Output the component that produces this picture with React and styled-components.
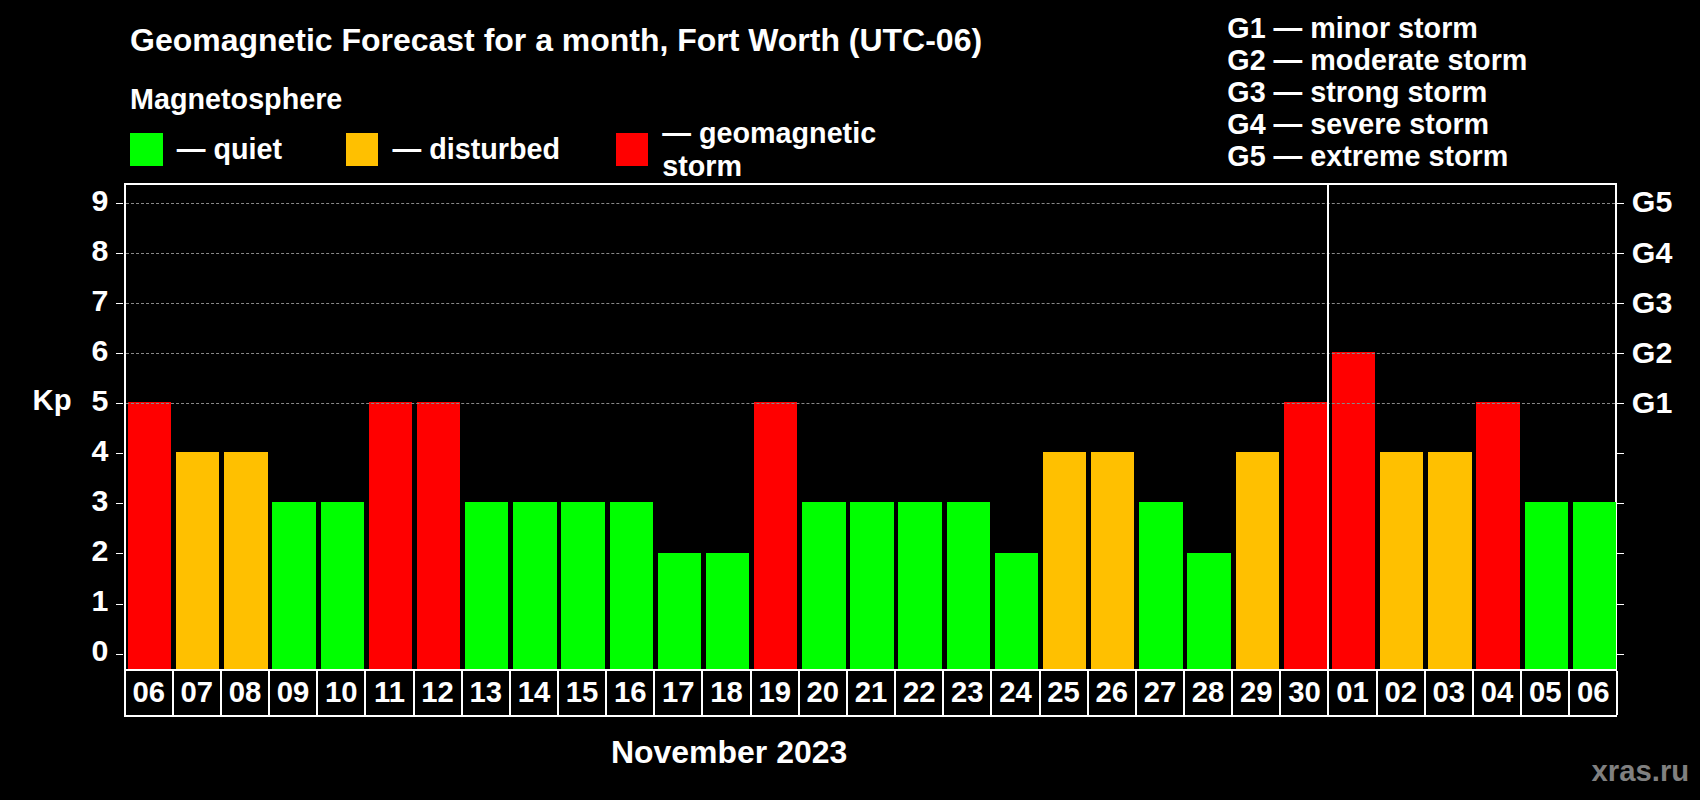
import React from "react";
import styled, { createGlobalStyle } from "styled-components";

const Global = createGlobalStyle`
  html, body { margin: 0; background: #000; }
  body { font-family: "Liberation Sans", Arial, sans-serif; color: #fff; font-weight: bold; }
`;

const U = 46.2;
const SLOT = 1377 / 31;
const days = ["06","07","08","09","10","11","12","13","14","15","16","17","18","19","20","21","22","23","24","25","26","27","28","29","30","01","02","03","04","05","06"];
const vals = [5,4,4,3,3,5,5,3,3,3,3,2,2,5,3,3,3,3,2,4,4,3,2,4,5,6,4,4,5,3,3];
const color = (v) => (v >= 5 ? "#ff0000" : v === 4 ? "#ffc000" : "#00ff00");

const Page = styled.div`
  width: 1568px; height: 738px; position: relative; zoom: 1.0842;
  display: flex; flex-direction: column;
`;
const Header = styled.div`
  display: flex; justify-content: space-between; padding: 0 0 0 120px; height: 169px; flex-shrink: 0;
`;
const LeftHead = styled.div`display: flex; flex-direction: column;`;
const Title = styled.div`font-size: 29.5px; margin-top: 22px; line-height: 30px;`;
const Sub = styled.div`font-size: 26.5px; margin-top: 25px; line-height: 30px;`;
const Legend = styled.div`display: flex; margin-top: 16px; align-items: center; height: 30px;`;
const LegendItem = styled.div`display: flex; align-items: center; gap: 13px; width: ${p => p.$w}px; font-size: 26.5px;`;
const Swatch = styled.div`width: 30px; height: 30px; background: ${p => p.$c};`;
const Scale = styled.div`
  width: 436px; padding-top: 11px; font-size: 26.5px; line-height: 29.5px;
`;
const Body = styled.div`display: flex; flex: 1;`;
const KpCol = styled.div`width: 72px; padding-top: 185px; line-height: 30px; font-size: 27px; text-align: right; padding-right: 6px; box-sizing: border-box;`;
const YAxis = styled.div`width: 42px; display: flex; flex-direction: column; margin-top: -7px; font-size: 28px;`;
const YLabel = styled.div`height: ${U}px; line-height: ${U}px; text-align: right; padding-right: 14px;`;
const PlotCol = styled.div`width: 1377px; display: flex; flex-direction: column;`;
const Plot = styled.div`
  position: relative; height: 448px; flex-shrink: 0; box-sizing: border-box;
  border: 2px solid #fff; border-bottom: none;
  display: flex; align-items: flex-end;
`;
const Grid = styled.div`
  position: absolute; left: 0; right: 0; top: ${p => p.$y}px;
  border-top: 1px dashed #888;
`;
const Tick = styled.div`
  position: absolute; top: ${p => p.$y}px; ${p => p.$side}: -9px; width: 7px; border-top: 1px solid #fff;
`;
const GLabel = styled.div`
  position: absolute; top: ${p => p.$y - 16}px; left: calc(100% + 16px); font-size: 28px; line-height: 32px;
`;
const Divider = styled.div`
  position: absolute; top: 0; bottom: 0; left: ${25 * SLOT - 2}px; border-left: 2px solid #fff;
`;
const Slot = styled.div`width: ${SLOT}px; display: flex; justify-content: center; flex-shrink: 0;`;
const Bar = styled.div`width: 40px; background: ${p => p.$c};`;
const Dates = styled.div`display: flex; flex-shrink: 0; height: 44px; border-top: 2px solid #fff; border-bottom: 2px solid #fff; box-sizing: border-box; border-left: 2px solid #fff;`;
const DateCell = styled.div`
  width: ${SLOT}px; flex-shrink: 0; box-sizing: border-box; border-right: 2px solid #fff;
  display: flex; align-items: center; justify-content: center; font-size: 27px;
`;
const Month = styled.div`text-align: center; font-size: 29.5px; line-height: 34px; margin-top: 16px; margin-left: -260px;`;
const Brand = styled.div`position: absolute; right: 10px; bottom: 11px; color: #808080; font-size: 27px;`;

export default function App() {
  const gy = (k) => 601 - 169 - U * k;
  return (
    <Page>
      <Global />
      <Header>
        <LeftHead>
          <Title>Geomagnetic Forecast for a month, Fort Worth (UTC-06)</Title>
          <Sub>Magnetosphere</Sub>
          <Legend>
            <LegendItem $w={199}><Swatch $c="#00ff00" />— quiet</LegendItem>
            <LegendItem $w={249}><Swatch $c="#ffc000" />— disturbed</LegendItem>
            <LegendItem $w={320}><Swatch $c="#ff0000" />— geomagnetic storm</LegendItem>
          </Legend>
        </LeftHead>
        <Scale>
          <div>G1 — minor storm</div>
          <div>G2 — moderate storm</div>
          <div>G3 — strong storm</div>
          <div>G4 — severe storm</div>
          <div>G5 — extreme storm</div>
        </Scale>
      </Header>
      <Body>
        <KpCol>Kp</KpCol>
        <YAxis>
          {[9,8,7,6,5,4,3,2,1,0].map(k => <YLabel key={k}>{k}</YLabel>)}
        </YAxis>
        <PlotCol>
          <Plot>
            {[5,6,7,8,9].map(k => <Grid key={k} $y={gy(k)} />)}
            {[0,1,2,3,4,5,6,7,8,9].map(k => <Tick key={"l"+k} $side="left" $y={gy(k)} />)}
            {[0,1,2,3,4,5,6,7,8,9].map(k => <Tick key={"r"+k} $side="right" $y={gy(k)} />)}
            {[1,2,3,4,5].map(g => <GLabel key={g} $y={gy(g + 4)}>G{g}</GLabel>)}
            <Divider />
            {vals.map((v, i) => (
              <Slot key={i}><Bar $c={color(v)} style={{ height: 15 + U * v }} /></Slot>
            ))}
          </Plot>
          <Dates>
            {days.map((d, i) => <DateCell key={i}>{d}</DateCell>)}
          </Dates>
          <Month>November 2023</Month>
        </PlotCol>
      </Body>
      <Brand>xras.ru</Brand>
    </Page>
  );
}
